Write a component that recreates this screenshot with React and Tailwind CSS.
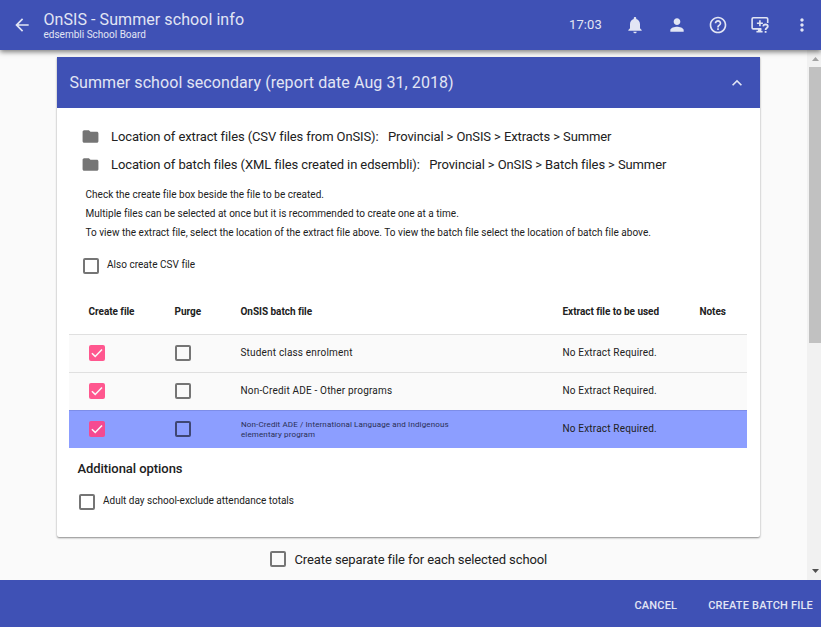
import { MdArrowBack, MdNotifications, MdPerson, MdHelpOutline, MdMoreVert, MdFolder, MdExpandLess } from "react-icons/md";

function Box({ checked, dark }) {
  if (checked) {
    return (
      <span className={`flex size-4 shrink-0 items-center justify-center rounded-[2px] ${dark ? "bg-[#f54a91]" : "bg-[#ff578f]"}`}>
        <svg viewBox="0 0 16 16" className="size-4" fill="none" stroke="#fafafa" strokeWidth="1.5">
          <path d="M2.9 8.3 6.2 11.4 13 4.4" />
        </svg>
      </span>
    );
  }
  return <span className={`size-4 shrink-0 rounded-[2px] border-2 ${dark ? "border-[#3f4673]" : "border-[#757575]"}`} />;
}

function MonitorHelp() {
  return (
    <svg viewBox="0 0 20 20" className="size-5" fill="none" stroke="currentColor" strokeWidth="1.6">
      <path d="M11.4 13.9H3.3Q2.1 13.9 2.1 12.7V4Q2.1 2.8 3.3 2.8H16.5Q17.7 2.8 17.7 4V8" />
      <path d="M9.9 5.2V11.2M6.9 8.2H12.9" />
      <path d="M6.4 16.7H12.6" />
      <path d="M9.6 14V16.7" strokeWidth="3.4" />
      <path d="M13.2 11.4Q13.4 9.4 15.5 9.4Q17.8 9.5 17.8 11.4Q17.7 12.5 16.5 13.2Q15.6 13.8 15.6 15.1" strokeWidth="1.8" />
      <path d="M15.6 16V17.8" strokeWidth="1.8" />
    </svg>
  );
}

function Location({ label, path }) {
  return (
    <div className="flex h-7 items-center">
      <MdFolder className="mb-px size-[19px] text-[#757575]" />
      <span className="ml-[11px] whitespace-pre text-[13px] tracking-[-0.108px]">{label + "   " + path}</span>
    </div>
  );
}

const rows = [
  { name: "Student class enrolment" },
  { name: "Non-Credit ADE - Other programs" },
  { name: "Non-Credit ADE / International Language and Indigenous elementary program", active: true },
];

const cols = "grid grid-cols-[86px_65.5px_322px_137px_1fr] items-center pl-5";

export default function App() {
  return (
    <div className="flex h-[627px] w-[821px] flex-col overflow-hidden bg-[#fafafa] font-[Roboto,sans-serif] text-[#212121]">
      <header className="z-10 flex h-[50px] shrink-0 items-center bg-[#3f51b5] pl-[12px] text-[#e2e5f4] shadow-[0_2px_5px_rgba(0,0,0,0.5)]">
        <MdArrowBack className="mb-px size-5" />
        <div className="ml-[11.5px] flex-1">
          <div className="text-[16px] leading-[19px] tracking-[0.07px]">OnSIS - Summer school info</div>
          <div className="text-[10px] leading-[11px]">edsembli School Board</div>
        </div>
        <span className="mr-[23px] text-[13px] tracking-[0.1px]">17:03</span>
        <div className="flex gap-[21.65px] pb-px pr-[9.5px]">
          <MdNotifications className="size-5" />
          <MdPerson className="size-5" />
          <MdHelpOutline className="size-5" />
          <MonitorHelp />
          <MdMoreVert className="size-5" />
        </div>
      </header>

      <div className="flex h-[530px] shrink-0">
        <main className="flex w-[807px] flex-col pl-[57px] pt-[7px]">
          <section className="h-[480px] w-[703px] rounded-b-[2px] bg-white shadow-[0_1px_2px_rgba(0,0,0,0.45)]">
            <div className="flex h-[51px] items-center justify-between bg-[#3f51b5] pl-[12.5px] pr-[13px] text-[#e2e5f4]">
              <h2 className="text-[16px] tracking-[0.08px]">Summer school secondary (report date Aug 31, 2018)</h2>
              <MdExpandLess className="size-5" />
            </div>
            <div className="px-3 pt-[15px]">
              <div className="pl-[12px]">
                <Location label="Location of extract files (CSV files from OnSIS):" path="Provincial > OnSIS > Extracts > Summer" />
                <Location label="Location of batch files (XML files created in edsembli):" path="Provincial > OnSIS > Batch files > Summer" />
              </div>
              <div className="mt-[6px] pl-[16.5px] text-[10px] leading-[19px] tracking-[0.022px]">
                <p>Check the create file box beside the file to be created.</p>
                <p>Multiple files can be selected at once but it is recommended to create one at a time.</p>
                <p>To view the extract file, select the location of the extract file above. To view the batch file select the location of batch file above.</p>
              </div>
              <label className="mt-[16px] flex h-4 items-center pl-[14px]">
                <Box />
                <span className="ml-2 -mt-[3px] text-[10px] tracking-[0.03px]">Also create CSV file</span>
              </label>

              <div className="mt-4 w-[678px]">
                <div className={`${cols} h-[44px] pb-[2px] text-[10px] font-bold tracking-[-0.04px]`}>
                  <span className="-ml-[0.5px]">Create file</span>
                  <span className="-ml-[0.5px]">Purge</span>
                  <span>OnSIS batch file</span>
                  <span>Extract file to be used</span>
                  <span>Notes</span>
                </div>
                {rows.map((r) => (
                  <div
                    key={r.name}
                    className={`${cols} h-[38px] border-t pb-[2px] text-[10px] tracking-[0.18px] ${r.active ? "border-[#7d8de8] bg-[#8c9eff]" : "border-[#e0e0e0] bg-[#fafafa]"}`}
                  >
                    <Box checked dark={r.active} />
                    <Box dark={r.active} />
                    {r.active ? (
                      <span className="w-[216px] pl-[0.5px] pt-[2px] text-[8px] leading-[10px] tracking-[0.13px] text-[#2a2f55]">{r.name}</span>
                    ) : (
                      <span>{r.name}</span>
                    )}
                    <span>No Extract Required.</span>
                  </div>
                ))}
              </div>

              <h3 className="mt-[11px] pl-[8.5px] text-[13px] font-medium leading-[20px] tracking-[-0.06px]">Additional options</h3>
              <label className="mt-[15px] flex h-4 items-center pl-[10px]">
                <Box />
                <span className="ml-2 -mt-[3px] text-[10px]">Adult day school-exclude attendance totals</span>
              </label>
            </div>
          </section>
          <label className="mt-[14px] flex h-4 items-center pl-[213px]">
            <Box />
            <span className="ml-[8.5px] pt-px text-[13px] tracking-[-0.1px]">Create separate file for each selected school</span>
          </label>
        </main>
        <div className="flex flex-1 flex-col items-end bg-[#f1f1f1]">
          <div className="flex h-[17px] w-3 items-center justify-center">
            <svg viewBox="0 0 7 4" className="h-1 w-[7px]" fill="#a3a3a3"><path d="M0 4 3.5 0 7 4Z" /></svg>
          </div>
          <div className="h-[276px] w-3 bg-[#c1c1c1]" />
          <div className="mt-auto flex h-[18px] w-3 items-center justify-center">
            <svg viewBox="0 0 7 4" className="h-1 w-[7px]" fill="#505050"><path d="M0 0H7L3.5 4Z" /></svg>
          </div>
        </div>
      </div>

      <footer className="flex h-[47px] shrink-0 items-center justify-end gap-[31px] bg-[#3f51b5] pr-2 pt-[5px] text-[11px] font-medium tracking-[0.18px] text-[#e2e5f4]">
        <button>CANCEL</button>
        <button>CREATE BATCH FILE</button>
      </footer>
    </div>
  );
}
